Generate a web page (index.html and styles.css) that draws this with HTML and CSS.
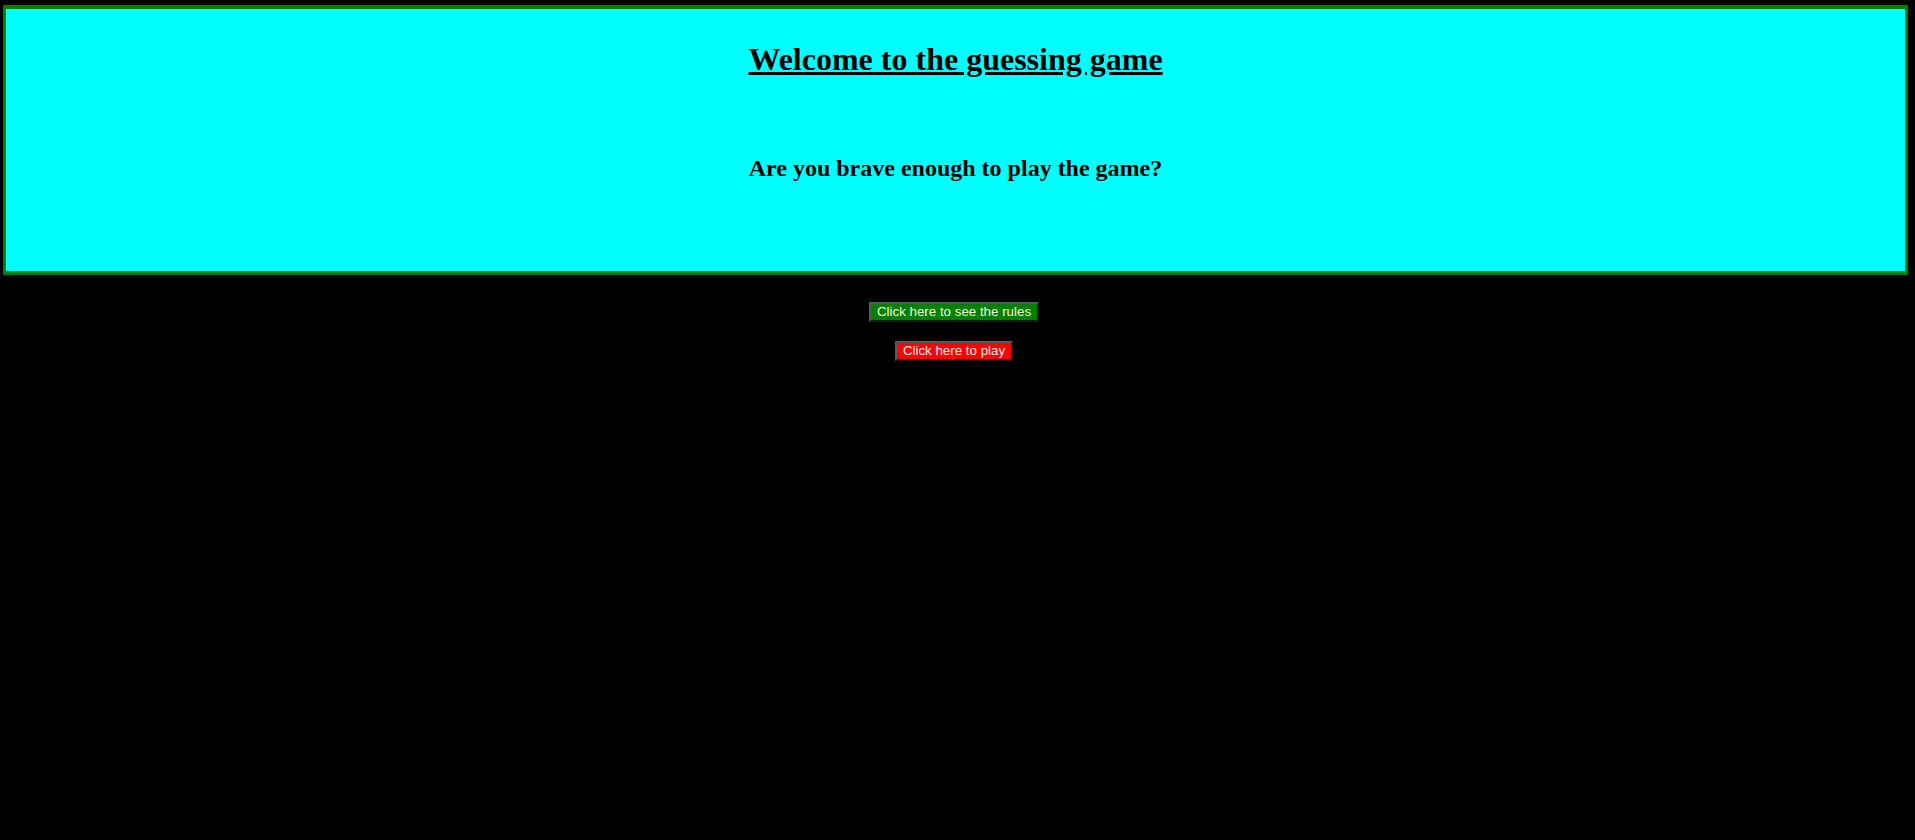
FILE: index.html
```html
<!DOCTYPE html>
<html lang="en">
<head>
<meta charset="utf-8">
<title>Guessing game</title>
<link rel="stylesheet" href="styles.css">
</head>
<body>
<header class="banner">
  <h1 class="title">Welcome to the guessing game</h1>
  <h2 class="subtitle">Are you brave enough to play the game?</h2>
</header>
<main class="actions">
  <button class="btn btn-rules" type="button">Click here to see the rules</button>
  <button class="btn btn-play" type="button">Click here to play</button>
</main>
</body>
</html>
```

FILE: styles.css
```css
html, body {
  margin: 0;
  padding: 0;
  background: #000;
}
body {
  font-family: "Liberation Serif", "Times New Roman", serif;
}
.banner {
  margin: 5px 7px 0 3px;
  border-style: solid;
  border-color: #008000;
  border-width: 4px 3px;
  background: #00ffff;
  padding: 32px 0 89px;
  display: flex;
  flex-direction: column;
  align-items: center;
  text-align: center;
  color: #000;
}
.title {
  margin: 0;
  font-size: 32px;
  line-height: 37px;
  font-weight: bold;
  text-decoration: underline;
}
.subtitle {
  margin: 76px 0 0;
  font-size: 24px;
  line-height: 28px;
  font-weight: bold;
}
.actions {
  display: flex;
  flex-direction: column;
  align-items: center;
  gap: 19px;
  padding: 27px 7px 0 0;
}
.btn {
  font-family: "Liberation Sans", Arial, sans-serif;
  font-size: 13.333px;
  line-height: 14px;
  padding: 1px 6px;
  border: 2px solid;
  border-color: #5a5a5a #1a1a1a #1a1a1a #5a5a5a;
  color: #fff;
  margin: 0;
  cursor: pointer;
}
.btn-rules {
  background: #008000;
  color: #f4f8dc;
}
.btn-play {
  background: #ff0000;
  color: #fff2f2;
}
```
